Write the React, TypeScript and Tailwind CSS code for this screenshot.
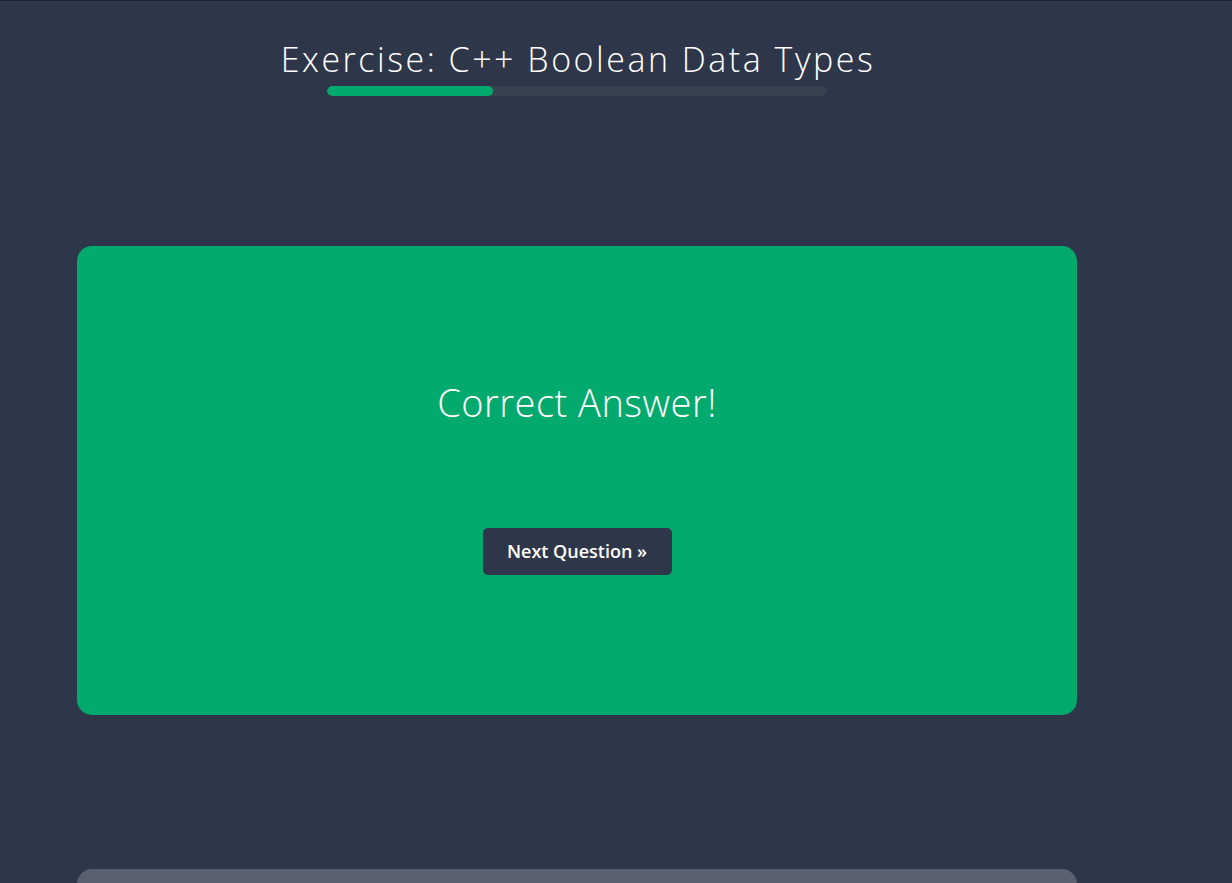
import React from "react";

export default function App() {
  return (
    <div className="min-h-[883px] w-full bg-[#2e3649] border-t border-[#1f232c] overflow-hidden" style={{ fontFamily: '"Open Sans", "Liberation Sans", sans-serif' }}>
      <div className="w-[1000px] ml-[77px] flex flex-col items-center">
        <h1 className="mt-[35px] text-[34px] leading-[46px] font-light text-white tracking-[2.5px] pl-[2px]">Exercise: C++ Boolean Data Types</h1>
        <div className="mt-[4px] w-[500px] h-[10px] rounded-full bg-[#38434f] overflow-hidden">
          <div className="h-full w-[166px] rounded-full bg-[#04aa6d]" />
        </div>
        <div className="mt-[150px] w-[1000px] h-[469px] rounded-[15px] bg-[#04aa6d] flex flex-col items-center">
          <div className="mt-[130px] text-[38px] leading-[52px] font-light text-white tracking-[0.5px]">Correct Answer!</div>
          <button className="mt-[100px] w-[189px] h-[47px] rounded-[5px] bg-[#2e3649] text-white text-[18px] font-semibold">Next Question »</button>
        </div>
        <div className="mt-[154px] w-[1000px] h-[40px] rounded-t-[15px] bg-[#596170]" />
      </div>
    </div>
  );
}
